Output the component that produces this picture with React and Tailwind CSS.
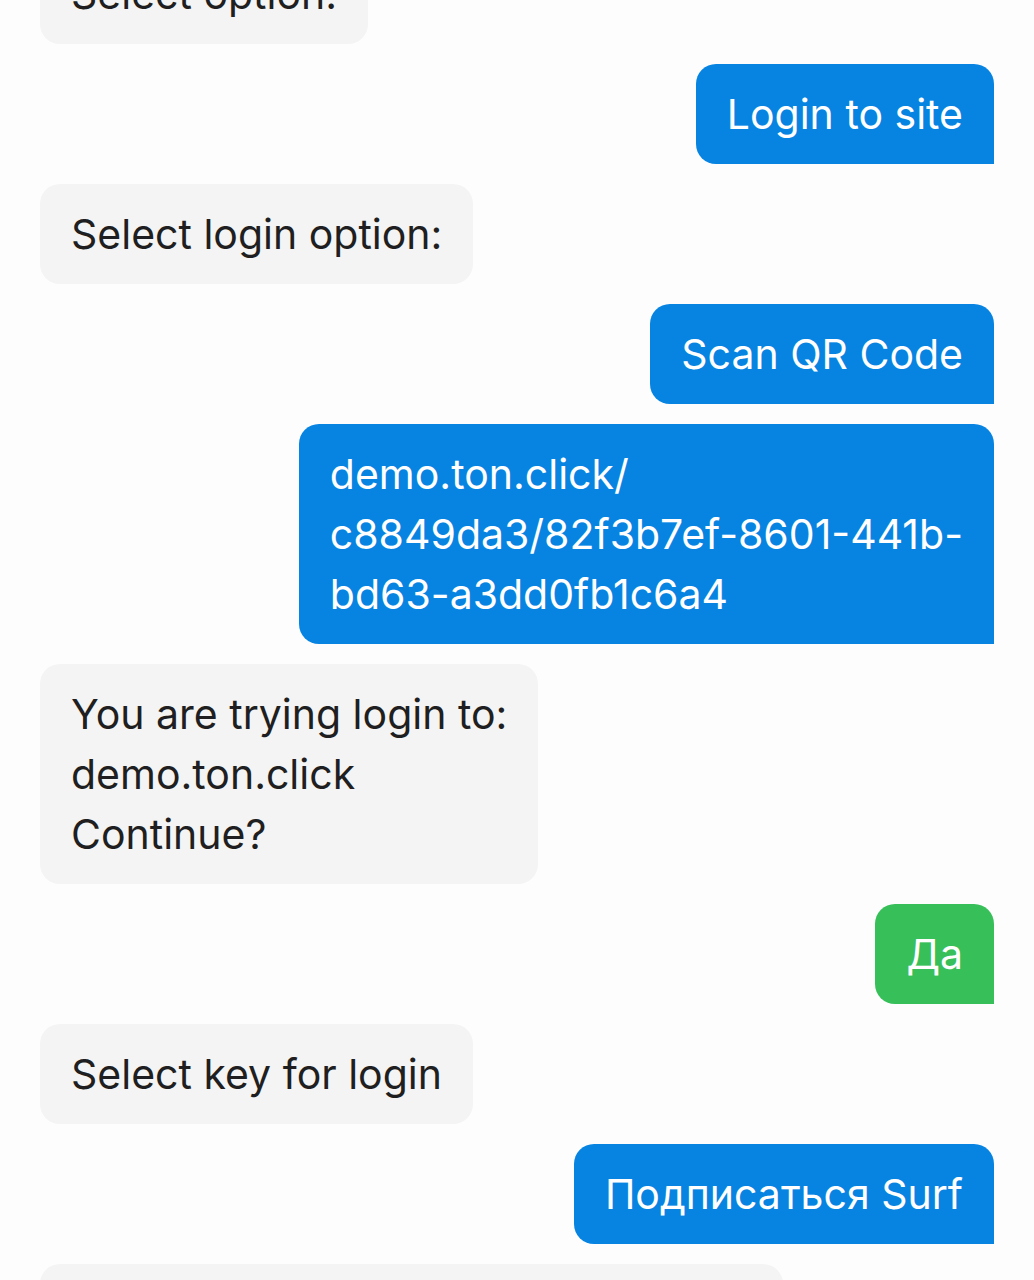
const messages = [
  { side: 'left', lines: ['Select option:'] },
  { side: 'right', lines: ['Login to site'] },
  { side: 'left', lines: ['Select login option:'] },
  { side: 'right', lines: ['Scan QR Code'] },
  { side: 'right', lines: ['demo.ton.click/', 'c8849da3/82f3b7ef-8601-441b-', 'bd63-a3dd0fb1c6a4'] },
  { side: 'left', lines: ['You are trying login to:', 'demo.ton.click', 'Continue?'] },
  { side: 'right', lines: ['Да'], green: true },
  { side: 'left', lines: ['Select key for login'] },
  { side: 'right', lines: ['Подписаться Surf'] },
];

function Bubble({ msg }) {
  const isRight = msg.side === 'right';
  const color = isRight
    ? msg.green
      ? 'bg-[#37bf5a] text-white'
      : 'bg-[#0784e2] text-white'
    : 'bg-[#f4f4f4] text-[#1f1f21]';
  const corners = isRight ? 'rounded-[20px] rounded-br-none' : 'rounded-[20px]';

  return (
    <div className={`flex ${isRight ? 'justify-end' : 'justify-start'}`}>
      <div className={`${color} ${corners} px-[31px] py-5 text-[41px] leading-[60px]`}>
        {msg.lines.map((line, i) => (
          <div key={i} className="whitespace-nowrap">{line}</div>
        ))}
      </div>
    </div>
  );
}

export default function App() {
  return (
    <div className="h-[1280px] overflow-hidden bg-[#fdfdfd] font-['Inter','Noto_Sans',sans-serif]">
      <div className="flex flex-col gap-[20px] px-10 -mt-[56px]">
        {messages.map((msg, i) => (
          <Bubble key={i} msg={msg} />
        ))}
        {/* next message, only its top edge is on screen */}
        <div className="flex justify-start">
          <div className="w-[743px] h-[100px] rounded-[20px] bg-[#f4f4f4]" />
        </div>
      </div>
    </div>
  );
}
